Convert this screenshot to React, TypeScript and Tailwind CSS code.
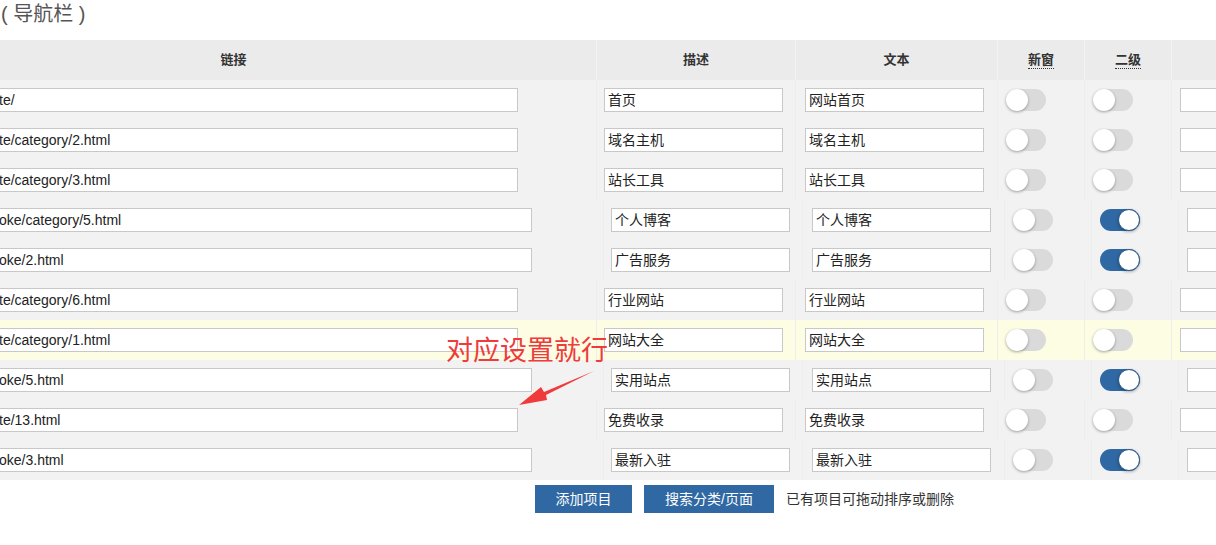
type Row = {
  link: string;
  desc: string;
  text: string;
  child?: boolean;
  sub?: boolean;
  hl?: boolean;
};

const rows: Row[] = [
  { link: 'te/', desc: '首页', text: '网站首页' },
  { link: 'te/category/2.html', desc: '域名主机', text: '域名主机' },
  { link: 'te/category/3.html', desc: '站长工具', text: '站长工具' },
  { link: 'oke/category/5.html', desc: '个人博客', text: '个人博客', child: true, sub: true },
  { link: 'oke/2.html', desc: '广告服务', text: '广告服务', child: true, sub: true },
  { link: 'te/category/6.html', desc: '行业网站', text: '行业网站' },
  { link: 'te/category/1.html', desc: '网站大全', text: '网站大全', hl: true },
  { link: 'oke/5.html', desc: '实用站点', text: '实用站点', child: true, sub: true },
  { link: 'te/13.html', desc: '免费收录', text: '免费收录' },
  { link: 'oke/3.html', desc: '最新入驻', text: '最新入驻', child: true, sub: true },
];

function Toggle({ on }: { on?: boolean }) {
  return on ? (
    <div className="w-10 h-[22px] rounded-full bg-[#2f68a3] flex items-center justify-end">
      <div className="w-[22px] h-[22px] rounded-full bg-white border border-[#2a5a8c] shadow-[0_1px_3px_rgba(0,0,0,0.3)]" />
    </div>
  ) : (
    <div className="w-10 h-[22px] rounded-full bg-[#dadada] flex items-center">
      <div className="w-[22px] h-[22px] rounded-full bg-white shadow-[0_1px_3px_rgba(0,0,0,0.35)]" />
    </div>
  );
}

function Field({ value, className }: { value: string; className: string }) {
  return (
    <div className={`h-6 bg-white border border-[#c8c8c8] flex items-center text-[14px] text-[#222] whitespace-nowrap overflow-hidden ${className}`}>
      {value}
    </div>
  );
}

export default function App() {
  return (
    <div
      className="relative w-[1216px] h-[545px] overflow-hidden bg-white text-[#333]"
      style={{ fontFamily: '"Liberation Sans", "Noto Sans CJK SC", sans-serif' }}
    >
      {/* title */}
      <div className="h-10 pl-[1px] pt-[2px] text-[20px] leading-6 text-[#555] whitespace-pre">( 导航栏 )</div>

      {/* table */}
      <div className="-ml-[129px] w-[1500px]">
        <div className="grid grid-cols-[726px_199px_202px_87px_87px_1fr] h-10 bg-[#ebebeb] text-[13px] font-bold text-[#333]">
          <div className="flex items-center justify-center border-r border-[#f2f2f2]">链接</div>
          <div className="flex items-center justify-center border-r border-[#f2f2f2]">描述</div>
          <div className="flex items-center justify-center border-r border-[#f2f2f2]">文本</div>
          <div className="flex items-center justify-center border-r border-[#f2f2f2]">
            <span className="border-b border-dotted border-[#333] leading-4">新窗</span>
          </div>
          <div className="flex items-center justify-center border-r border-[#f2f2f2]">
            <span className="border-b border-dotted border-[#333] leading-4">二级</span>
          </div>
          <div />
        </div>

        {rows.map((r, i) => (
          <div
            key={i}
            className={`grid h-10 ${r.child ? 'grid-cols-[733px_199px_202px_87px_87px_1fr]' : 'grid-cols-[726px_199px_202px_87px_87px_1fr]'} ${r.hl ? 'bg-[#fdfde3]' : 'bg-[#f2f2f2]'}`}
          >
            <div className="flex items-center pl-2 border-r border-[#ededed]">
              <Field value={r.link} className={`pl-[119px] ${r.child ? 'w-[653px]' : 'w-[639px]'}`} />
            </div>
            <div className="flex items-center pl-[7px] border-r border-[#ededed]">
              <Field value={r.desc} className="w-[179px] pl-[3px]" />
            </div>
            <div className="flex items-center pl-[9px] border-r border-[#ededed]">
              <Field value={r.text} className="w-[179px] pl-[3px]" />
            </div>
            <div className="flex items-center pl-2 border-r border-[#ededed]">
              <Toggle />
            </div>
            <div className="flex items-center pl-2 border-r border-[#ededed]">
              <Toggle on={r.sub} />
            </div>
            <div className="flex items-center pl-2">
              <Field value="" className="w-[120px]" />
            </div>
          </div>
        ))}
      </div>

      {/* actions */}
      <div className="flex items-center mt-[5px] pl-[535px] gap-3 text-[14px]">
        <button className="w-[97px] h-7 bg-[#2f68a3] text-white">添加项目</button>
        <button className="w-[130px] h-7 bg-[#2f68a3] text-white">搜索分类/页面</button>
        <span className="text-[#333] text-[14px]">已有项目可拖动排序或删除</span>
      </div>

      {/* annotation */}
      <div className="absolute left-[446px] top-[338px] text-[27px] leading-none text-[#ef3b3b]">对应设置就行</div>
      <svg className="absolute left-0 top-0 pointer-events-none" width="1216" height="545">
        <path d="M594 371 L546 395 L547 400 L519 405 L541 387 L544 392 Z" fill="#ef3b3b" />
      </svg>
    </div>
  );
}
